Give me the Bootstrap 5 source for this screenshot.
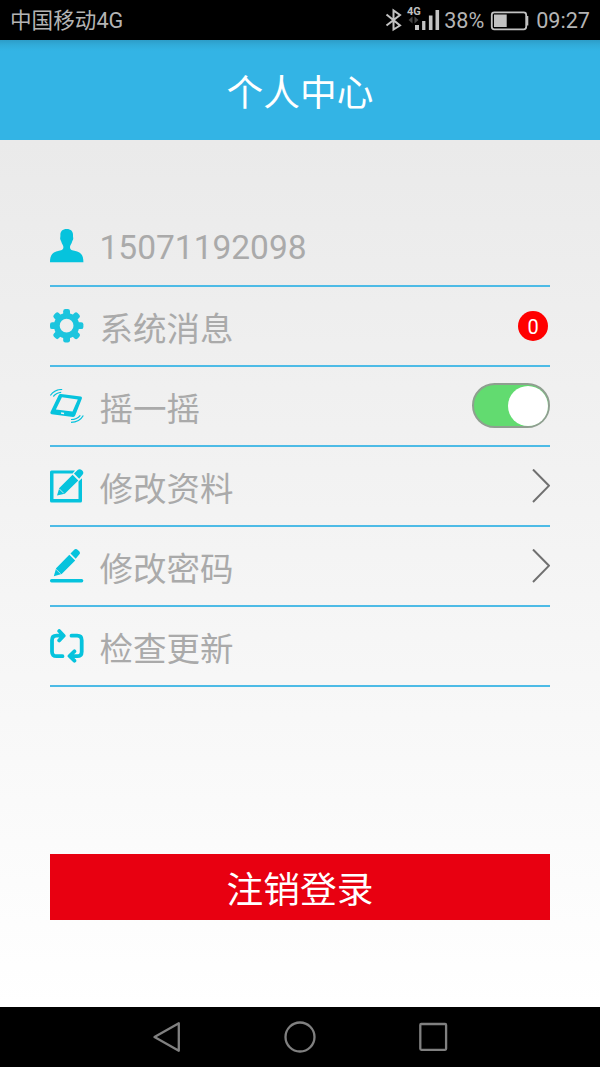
<!DOCTYPE html>
<html lang="zh-CN">
<head>
<meta charset="utf-8">
<meta name="viewport" content="width=device-width, initial-scale=1">
<title>个人中心</title>
<link href="https://cdn.jsdelivr.net/npm/bootstrap@5.3.0/dist/css/bootstrap.min.css" rel="stylesheet">
<style>
  body { font-family: Roboto, "Noto Sans CJK SC", sans-serif; background: #000; overflow: hidden; }
  .screen { height: 1067px; }
  .statusbar { height: 40px; padding: 2px 10px 0; background: #000; color: #b4b4b4; font-size: 21.6px; line-height: 38px; }
  .titlebar { height: 100px; background: linear-gradient(#2d9dc8 0, #31abd9 5px, #33b4e5 11px); color: #fff; font-size: 36.7px; line-height: 40px; padding-top: 7px; }
  .page { background: linear-gradient(#eaeaea, #fff); padding: 67px 50px 0; }
  .entry { height: 80px; border-bottom: 2px solid #4dbbe6; font-size: 33.5px; color: #aaa; line-height: 40px; }
  .entry .glyph { width: 34px; height: 34px; color: #06c3dd; margin-right: 15.5px; }
  .entry .caption { padding-top: 7px; }
  .entry .phone { padding-top: 3px; }
  .count { width: 30px; height: 30px; margin-right: 2px; background: #f00; color: #fff; font-size: 20px; line-height: 32px; }
  .toggle { width: 78px; height: 45px; border: 2px solid #8f9f90; background: #62db70; padding: 0; margin-bottom: 1px; }
  .toggle .knob { width: 40px; height: 40px; background: #fff; }
  .logout { margin-top: 167px; height: 66px; background: #e80011; color: #fff; font-size: 36.7px; line-height: 40px; padding: 8px 0 0; border: 0; border-radius: 0; }
  .navkeys { height: 60px; background: #000; }
</style>
</head>
<body>
<div class="screen d-flex flex-column">
  <div class="statusbar d-flex justify-content-between align-items-center">
    <span>中国移动4G</span>
    <div class="d-flex align-items-center">
      <svg width="59" height="40" viewBox="385.500 1 59 40" fill="none">
        <path d="M387 14.500L400.500 25.500L394 29.500V10.500L400.500 15L387 25.500" stroke="#c2c2c2" stroke-width="2"/>
        <text x="407.500" y="15" font-size="11" font-weight="700" fill="#c0c0c0">4G</text>
        <path d="M413 16.500v7l-4-3.500zM415 16.500v7l4-3.500z" fill="#444"/>
        <path d="M415.500 25h4v5h-4zM422.600 21h3.300v9h-3.300zM429.400 15.500h3.600v14.500h-3.600zM436 10h3.600v20h-3.600z" fill="#c4c4c4"/>
      </svg>
      <span>38%</span>
      <svg width="52" height="40" viewBox="484 1 52 40">
        <rect x="491.800" y="12.300" width="34.400" height="17" rx="2.500" fill="none" stroke="#c2c2c2" stroke-width="1.800"/>
        <path d="M494 14.500h12.700v12.500H494zM526.500 16h1.800v9.500h-1.800z" fill="#c2c2c2"/>
      </svg>
      <span>09:27</span>
    </div>
  </div>

  <header class="titlebar d-flex align-items-center justify-content-center">个人中心</header>

  <main class="page flex-grow-1">
    <div class="entry d-flex align-items-center">
      <svg class="glyph" viewBox="0 0 34 34" fill="currentColor"><path d="M16.700 0c-4.400 0-6.600 2.500-6.300 6.600.1 1.200-.4 2-.2 3.400.2 1.300 1 1.700 1.200 3 .3 1.900 2 3.200 2 5 0 2.500-1 3-4.400 3.800C3 23.200 0 25 0 33.300h33.400c0-8.300-3-10.100-9-11.500-3.400-.8-4.400-1.300-4.400-3.800 0-1.800 1.700-3.100 2-5 .2-1.300 1-1.700 1.200-3 .2-1.400-.3-2.200-.2-3.400C23.300 2.500 21.100 0 16.700 0z"/></svg>
      <span class="caption phone">15071192098</span>
    </div>
    <div class="entry d-flex align-items-center">
      <svg class="glyph" viewBox="0 0 34 34"><g fill="#1cc5de"><path fill-rule="evenodd" d="M16.600 4a12.700 12.700 0 1 0 0 25.400a12.700 12.700 0 0 0 0-25.400zm0 5.800a6.900 6.900 0 1 1 0 13.800a6.900 6.900 0 0 1 0-13.800z"/><g id="teeth"><rect x="13.200" y="0" width="6.800" height="6.500" rx="2.200"/><rect x="13.200" y="26.900" width="6.800" height="6.500" rx="2.200"/><rect x="0" y="13.300" width="6.500" height="6.800" rx="2.200"/><rect x="26.900" y="13.300" width="6.500" height="6.800" rx="2.200"/></g><use href="#teeth" transform="rotate(45 16.600 16.700)"/></g></svg>
      <span class="caption">系统消息</span>
      <span class="count rounded-circle text-center ms-auto">0</span>
    </div>
    <div class="entry d-flex align-items-center">
      <svg class="glyph" viewBox="0 0 34 34"><path fill="currentColor" fill-rule="evenodd" d="M11 5l19.700 2.500q1.600.3 1.200 1.900l-6.600 16.900q-.7 1.900-2.300 1.700L1.600 25.200Q0 24.900.4 23.300L8.600 6.200Q9.400 4.700 11 5zm.9 3.300L5.900 20.400l16.600 2.200 5.300-12zM11.200 23.300l-.3 1.500 3 .4.300-1.500z"/><path fill="none" stroke="currentColor" stroke-width="1.200" d="M.3 6.500Q4.500.5 12.200.5M3.300 7.500Q6.500 3.700 11.200 3.400M21 33.300Q29.500 33.300 33.300 26.500M21 30.500Q27 30.500 30.300 26.300"/></svg>
      <span class="caption">摇一摇</span>
      <div class="toggle rounded-pill ms-auto d-flex align-items-center justify-content-end"><span class="knob rounded-circle"></span></div>
    </div>
    <div class="entry d-flex align-items-center">
      <svg class="glyph" viewBox="0 0 34 34" fill="currentColor"><path d="M0 3q0-1.500 1.500-1.500H25L22.500 4.500H3.500v25.500h25V12.500L32 9.300V32q0 1.500-1.500 1.500h-29Q0 33.500 0 32zM7 26.600l2.300-7.600L22.600 5.700l5.700 5.700-13.500 13.300zM24 4.600l3.600-3.600q2-1.800 4.400.3t.5 4.400L29.200 9.700z"/><path d="M9.200 19.800l4.500 4.500" stroke="#f1f1f1" stroke-width=".8"/></svg>
      <span class="caption">修改资料</span>
      <svg class="ms-auto" width="18" height="34" viewBox="0 0 18 34" fill="none"><path d="M1 .5L17 16.700L1 33" stroke="#707070" stroke-width="2"/></svg>
    </div>
    <div class="entry d-flex align-items-center">
      <svg class="glyph" viewBox="0 0 34 34" fill="currentColor"><rect y="30" width="33.300" height="3.400" rx="1.600"/><path d="M3.800 27.200l2.300-7.900L19.300 5.700l5.900 5.800-13.500 13.400zM20.500 4.500l3.700-3.800q1.500-1.600 4.200.7t.8 4.200l-3.500 4.200z"/><path d="M6.100 20.300l4.600 4.500" stroke="#f4f4f4" stroke-width=".7"/></svg>
      <span class="caption">修改密码</span>
      <svg class="ms-auto" width="18" height="34" viewBox="0 0 18 34" fill="none"><path d="M1 .5L17 16.700L1 33" stroke="#707070" stroke-width="2"/></svg>
    </div>
    <div class="entry d-flex align-items-center">
      <svg class="glyph" viewBox="0 0 34 34" fill="none" stroke="currentColor" stroke-width="3.800" stroke-linecap="round" stroke-linejoin="round"><path d="M12.500 27.200H6.500Q2 27.200 2 22.700V11.200Q2 6.700 6.500 6.700H13M9.200 2l4.500 4.700-4.500 4.700M21.500 6.700h5.700q4.500 0 4.500 4.500v11.500q0 4.500-4.500 4.500H20.500M24.400 22.300l-4.900 4.700 4.900 4.700"/></svg>
      <span class="caption">检查更新</span>
    </div>
    <button type="button" class="logout btn w-100 d-flex align-items-center justify-content-center">注销登录</button>
  </main>

  <nav class="navkeys">
    <svg class="d-block" width="600" height="60" viewBox="0 0 600 60" fill="none" stroke="#808080" stroke-width="2.300" stroke-linejoin="round"><path d="M154.500 30L178.800 16.200V43.800z"/><circle cx="300" cy="30" r="14.500"/><rect x="420.300" y="17" width="25.800" height="25.800" rx="1"/></svg>
  </nav>
</div>
<script src="https://cdn.jsdelivr.net/npm/bootstrap@5.3.0/dist/js/bootstrap.bundle.min.js"></script>
</body>
</html>
